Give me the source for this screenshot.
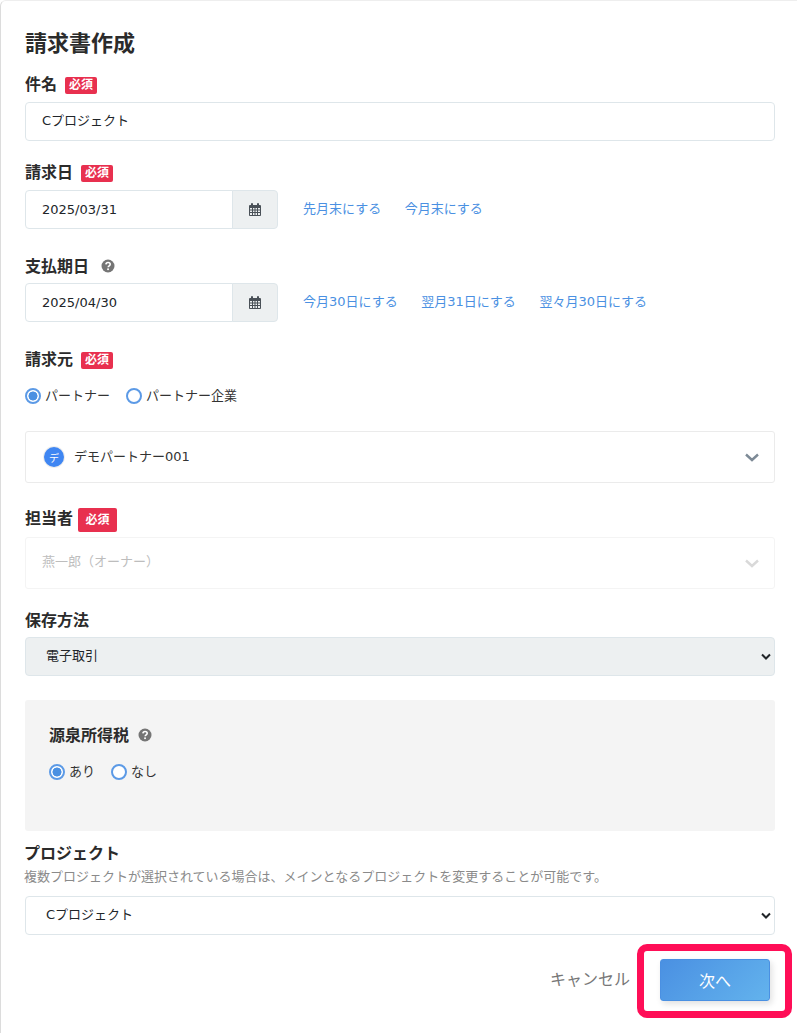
<main class="card">
  <h1>請求書作成</h1>

  <section class="field f-subject">
    <div class="label"><span>件名</span><span class="badge">必須</span></div>
    <input class="control cjk" type="text" value="Cプロジェクト" />
  </section>

  <section class="field f-date">
    <div class="label"><span>請求日</span><span class="badge">必須</span></div>
    <div class="date-row">
      <div class="date">
        <input class="control date-input" type="text" value="2025/03/31" />
        <span class="addon">
          <svg viewBox="0 0 12 13" width="12" height="13"><path fill="#495057" d="M0 3.2C0 2.5.5 2 1.2 2H2V1a1 1 0 0 1 2 0v1h4V1a1 1 0 0 1 2 0v1h.8c.7 0 1.2.5 1.2 1.2V12c0 .6-.5 1-1.2 1H1.2C.5 13 0 12.600 0 12zM1 5v1.500h2V5zm3 0v1.500h1.500V5zm2.500 0v1.500H8V5zM9 5v1.500h2V5zM1 7.500V9h2V7.500zm3 0V9h1.500V7.500zm2.500 0V9H8V7.500zm2.500 0V9h2V7.500zM1 10v2h2v-2zm3 0v2h1.500v-2zm2.500 0v2H8v-2zM9 10v2h2v-2z"/></svg>
        </span>
      </div>
      <a href="#a">先月末にする</a>
      <a href="#b">今月末にする</a>
    </div>
  </section>

  <section class="field f-due">
    <div class="label"><span>支払期日</span><svg class="help help-due" viewBox="0 0 14 14" width="14" height="14"><circle cx="7" cy="7" r="6.500" fill="#757575"/><path d="M4.900 5.400c.1-1.200 1-1.900 2.200-1.900 1.200 0 2.100.7 2.100 1.800 0 1.700-2 1.500-2 3" fill="none" stroke="#fff" stroke-width="1.600"/><rect x="6.200" y="9.400" width="1.700" height="1.700" fill="#fff"/></svg></div>
    <div class="date-row">
      <div class="date">
        <input class="control date-input" type="text" value="2025/04/30" />
        <span class="addon">
          <svg viewBox="0 0 12 13" width="12" height="13"><path fill="#495057" d="M0 3.2C0 2.5.5 2 1.2 2H2V1a1 1 0 0 1 2 0v1h4V1a1 1 0 0 1 2 0v1h.8c.7 0 1.2.5 1.2 1.2V12c0 .6-.5 1-1.2 1H1.2C.5 13 0 12.600 0 12zM1 5v1.500h2V5zm3 0v1.500h1.500V5zm2.500 0v1.500H8V5zM9 5v1.500h2V5zM1 7.500V9h2V7.500zm3 0V9h1.500V7.500zm2.500 0V9H8V7.500zm2.500 0V9h2V7.500zM1 10v2h2v-2zm3 0v2h1.500v-2zm2.500 0v2H8v-2zM9 10v2h2v-2z"/></svg>
        </span>
      </div>
      <a href="#c">今月30日にする</a>
      <a href="#d">翌月31日にする</a>
      <a href="#e">翌々月30日にする</a>
    </div>
  </section>

  <section class="field f-from">
    <div class="label"><span>請求元</span><span class="badge">必須</span></div>
    <div class="radios">
      <label><input type="radio" name="from" checked /><span class="rtext">パートナー</span></label>
      <label><input type="radio" name="from" /><span class="rtext">パートナー企業</span></label>
    </div>
    <div class="picker">
      <span class="avatar">デ</span>
      <span class="ptext">デモパートナー001</span>
      <svg class="chev" viewBox="0 0 14 9" width="14" height="9"><path d="M1 1.500l6 5.500 6-5.500" fill="none" stroke="#7d8a96" stroke-width="2.400"/></svg>
    </div>
  </section>

  <section class="field f-owner">
    <div class="label"><span>担当者</span><span class="badge badge-lg">必須</span></div>
    <div class="picker picker-off">
      <span class="ptext">燕一郎（オーナー）</span>
      <svg class="chev" viewBox="0 0 14 9" width="14" height="9"><path d="M1 1.500l6 5.500 6-5.500" fill="none" stroke="#d9d9d9" stroke-width="2.400"/></svg>
    </div>
  </section>

  <section class="field f-save">
    <div class="label"><span>保存方法</span></div>
    <div class="select-wrap">
      <select class="control select select-off"><option>電子取引</option></select>
      <svg class="arrow" viewBox="0 0 10 7" width="10" height="7"><path d="M1 1.500l4 4 4-4" fill="none" stroke="#212529" stroke-width="2"/></svg>
    </div>
  </section>

  <section class="tax">
    <div class="label"><span>源泉所得税</span><svg class="help" viewBox="0 0 14 14" width="14" height="14"><circle cx="7" cy="7" r="6.500" fill="#757575"/><path d="M4.900 5.400c.1-1.200 1-1.900 2.200-1.900 1.200 0 2.100.7 2.100 1.800 0 1.700-2 1.500-2 3" fill="none" stroke="#fff" stroke-width="1.600"/><rect x="6.200" y="9.400" width="1.700" height="1.700" fill="#fff"/></svg></div>
    <div class="radios tax-radios">
      <label><input type="radio" name="tax" checked /><span class="rtext">あり</span></label>
      <label><input type="radio" name="tax" /><span class="rtext">なし</span></label>
    </div>
  </section>

  <section class="field f-project">
    <h2>プロジェクト</h2>
    <p>複数プロジェクトが選択されている場合は、メインとなるプロジェクトを変更することが可能です。</p>
    <div class="select-wrap">
      <select class="control select"><option>Cプロジェクト</option></select>
      <svg class="arrow" viewBox="0 0 10 7" width="10" height="7"><path d="M1 1.500l4 4 4-4" fill="none" stroke="#212529" stroke-width="2"/></svg>
    </div>
  </section>

  <footer class="actions">
    <button class="cancel" type="button">キャンセル</button>
    <div class="highlight"><button class="next" type="button">次へ</button></div>
  </footer>
</main>

<style>
  :global(body) {
    margin: 0;
    background: #fff;
    font-family: "DejaVu Sans", "Noto Sans CJK JP", sans-serif;
    color: #212529;
  }
  .card {
    box-sizing: border-box;
    width: 797px;
    height: 1033px;
    overflow: hidden;
    padding: 0 22px 0 24px;
    border-left: 1px solid #dcdcdc;
    border-top: 1px solid #eeeeee;
    border-top-left-radius: 6px;
  }
  h1 {
    margin: 28px 0 13px;
    font-size: 22px;
    line-height: 30px;
    font-weight: 700;
    color: #2b2b2b;
  }
  .label {
    box-sizing: border-box;
    display: flex;
    align-items: center;
    height: 24px;
    padding-bottom: 2px;
    font-size: 16px;
    font-weight: 700;
    color: #2b2b2b;
  }
  .badge {
    display: inline-flex;
    align-items: center;
    justify-content: center;
    width: 32px;
    height: 17px;
    margin: 4px 0 0 8px;
    border-radius: 2px;
    background: #e8304f;
    color: #fff;
    font-size: 12px;
    font-weight: 700;
    line-height: 1;
  }
  .badge-lg {
    width: 39px;
    height: 24px;
    margin-left: 5px;
    margin-top: 4px;
    position: relative;
    top: 1px;
  }
  .control {
    box-sizing: border-box;
    display: block;
    width: 100%;
    height: 39px;
    padding: 0 16px;
    border: 1px solid #dee6ea;
    border-radius: 4px;
    background: #fff;
    font: inherit;
    font-size: 13px;
    color: #212529;
    outline: none;
  }
  .cjk { padding-bottom: 5px; }
  .f-subject { margin-top: 0; }
  .f-date { margin-top: 19px; }
  .f-due { margin-top: 25px; }
  .f-from { margin-top: 25px; }
  .f-owner { margin-top: 23px; }
  .f-save { margin-top: 19px; }
  .f-subject .label { margin-bottom: 6px; }
  .f-date .label { margin-bottom: 6px; }
  .f-due .label { margin-bottom: 5px; }
  .f-from .label { margin-bottom: 12px; }
  .f-owner .label { margin-bottom: 7px; }
  .f-save .label { margin-bottom: 5px; }
  .date-row {
    display: flex;
    align-items: center;
    font-size: 13px;
  }
  .date {
    display: flex;
    width: 253px;
    flex: none;
    margin-right: 25px;
  }
  .date-input {
    flex: 1;
    min-width: 0;
    border-radius: 4px 0 0 4px;
  }
  .addon {
    display: flex;
    align-items: center;
    justify-content: center;
    box-sizing: border-box;
    width: 46px;
    height: 39px;
    margin-left: -1px;
    border: 1px solid #dee6ea;
    border-radius: 0 4px 4px 0;
    background: #edf0f1;
  }
  a {
    color: #4a90e2;
    text-decoration: none;
    margin-right: 23.500px;
    padding-bottom: 4px;
  }
  .radios {
    display: flex;
    gap: 16px;
    font-size: 13px;
    color: #333;
    height: 24px;
  }
  label {
    display: flex;
    align-items: center;
    gap: 4px;
  }
  .rtext { padding-bottom: 2px; }
  input[type="radio"] {
    appearance: none;
    box-sizing: border-box;
    width: 16px;
    height: 16px;
    margin: 2px 0 0;
    border: 2px solid #5c9ae6;
    border-radius: 50%;
    background: #fff;
  }
  input[type="radio"]:checked {
    background: radial-gradient(circle, #4a90e2 0 4.200px, #fff 4.800px);
  }
  .picker {
    box-sizing: border-box;
    display: flex;
    align-items: center;
    gap: 10px;
    height: 52px;
    margin-top: 24px;
    padding: 0 15px 0 18px;
    border: 1px solid #ebebeb;
    border-radius: 3px;
    font-size: 13px;
    color: #333;
  }
  .ptext { padding-bottom: 4px; }
  .picker-off .ptext { padding-bottom: 6px; }
  .avatar {
    display: flex;
    align-items: center;
    justify-content: center;
    width: 20px;
    height: 20px;
    border-radius: 50%;
    background: #3f86f2;
    box-shadow: 0 0 0 1px #eee;
    color: #fff;
    font-size: 10px;
  }
  .chev { margin-left: auto; }
  .picker-off {
    margin-top: 0;
    padding-left: 16px;
    border-color: #f4f4f4;
    color: #bdbdbd;
  }
  .select-wrap { position: relative; }
  .select {
    appearance: none;
    padding-left: 20px;
    padding-bottom: 3px;
  }
  .select-off { background: #edf0f1; }
  .arrow {
    position: absolute;
    right: 4px;
    top: 16px;
    pointer-events: none;
  }
  .tax {
    box-sizing: border-box;
    height: 131px;
    margin-top: 24px;
    padding: 23px 24px 0;
    background: #f4f4f4;
    border-radius: 3px;
  }
  .tax-radios { margin-top: 12px; }
  .help { margin: 2px 0 0 9px; }
  .help-due { margin-left: 12px; }
  .f-project { margin-top: 10px; margin-left: -1px; }
  .f-project .select-wrap { margin-left: 1px; margin-top: 10px; }
  h2 {
    margin: 0;
    font-size: 16px;
    line-height: 26px;
    font-weight: 700;
    color: #2b2b2b;
  }
  p {
    margin: 1px 0 0;
    font-size: 13px;
    line-height: 18px;
    color: #8a8a8a;
  }
  .actions {
    display: flex;
    justify-content: flex-end;
    align-items: center;
    margin: 9px -17px 0 0;
  }
  .cancel {
    border: 0;
    background: none;
    padding: 0 0 6px;
    margin-right: 7px;
    font: inherit;
    font-size: 16px;
    color: #777;
  }
  .highlight {
    box-sizing: border-box;
    width: 155px;
    height: 74px;
    padding: 8px 14px 8px 16px;
    border: 7px solid #ff0e57;
    border-radius: 10px;
    background: #fff;
  }
  .next {
    display: block;
    width: 110px;
    height: 42px;
    border: 1px solid #4a90e2;
    border-radius: 3px;
    background: linear-gradient(135deg, #4a90e2, #63b3ed);
    box-shadow: 2px 3px 6px rgba(0, 0, 0, 0.12);
    color: #fff;
    font: inherit;
    font-size: 16px;
  }
</style>
